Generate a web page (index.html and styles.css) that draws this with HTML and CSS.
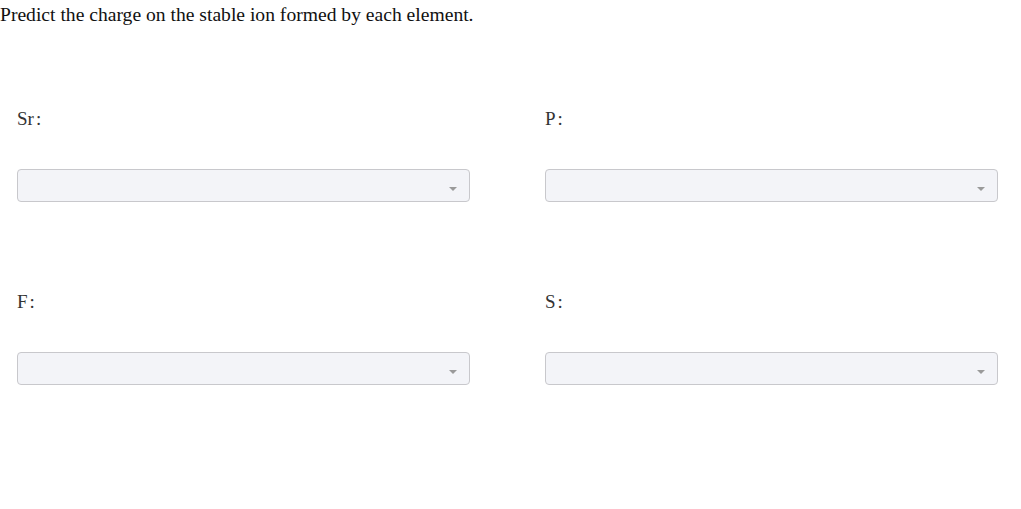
FILE: index.html
```html
<!DOCTYPE html>
<html>
<head>
<meta charset="utf-8">
<link rel="stylesheet" href="styles.css">
</head>
<body>
<p class="prompt">Predict the charge on the stable ion formed by each element.</p>
<div class="grid">
  <div class="field">
    <div class="label">Sr<span class="colon">:</span></div>
    <div class="select"><span class="arrow"></span></div>
  </div>
  <div class="field">
    <div class="label">P<span class="colon">:</span></div>
    <div class="select"><span class="arrow"></span></div>
  </div>
  <div class="field">
    <div class="label">F<span class="colon">:</span></div>
    <div class="select"><span class="arrow"></span></div>
  </div>
  <div class="field">
    <div class="label">S<span class="colon">:</span></div>
    <div class="select"><span class="arrow"></span></div>
  </div>
</div>
</body>
</html>
```
FILE: styles.css
```css
html, body {
  margin: 0;
  padding: 0;
  background: #fff;
}
body {
  font-family: "Liberation Serif", "Times New Roman", serif;
  color: #222;
}
.prompt {
  margin: 0;
  padding-top: 4px;
  font-size: 19.6px;
  line-height: 22px;
  color: #111;
}
.grid {
  display: grid;
  grid-template-columns: 453px 453px;
  column-gap: 75px;
  row-gap: 89px;
  padding: 82px 0 0 17px;
}
.field {
  display: flex;
  flex-direction: column;
}
.label {
  font-size: 19px;
  line-height: 22px;
  color: #333;
  margin-bottom: 39px;
}
.colon {
  margin-left: 2px;
}
.select {
  height: 31px;
  border: 1px solid #c8c8cc;
  border-radius: 4px;
  background: #f3f4f8;
  display: flex;
  align-items: center;
  justify-content: flex-end;
  padding-right: 12px;
}
.arrow {
  width: 0;
  height: 0;
  border-left: 4px solid transparent;
  border-right: 4px solid transparent;
  border-top: 4px solid #9a9a9a;
  margin-top: 6px;
}
```
